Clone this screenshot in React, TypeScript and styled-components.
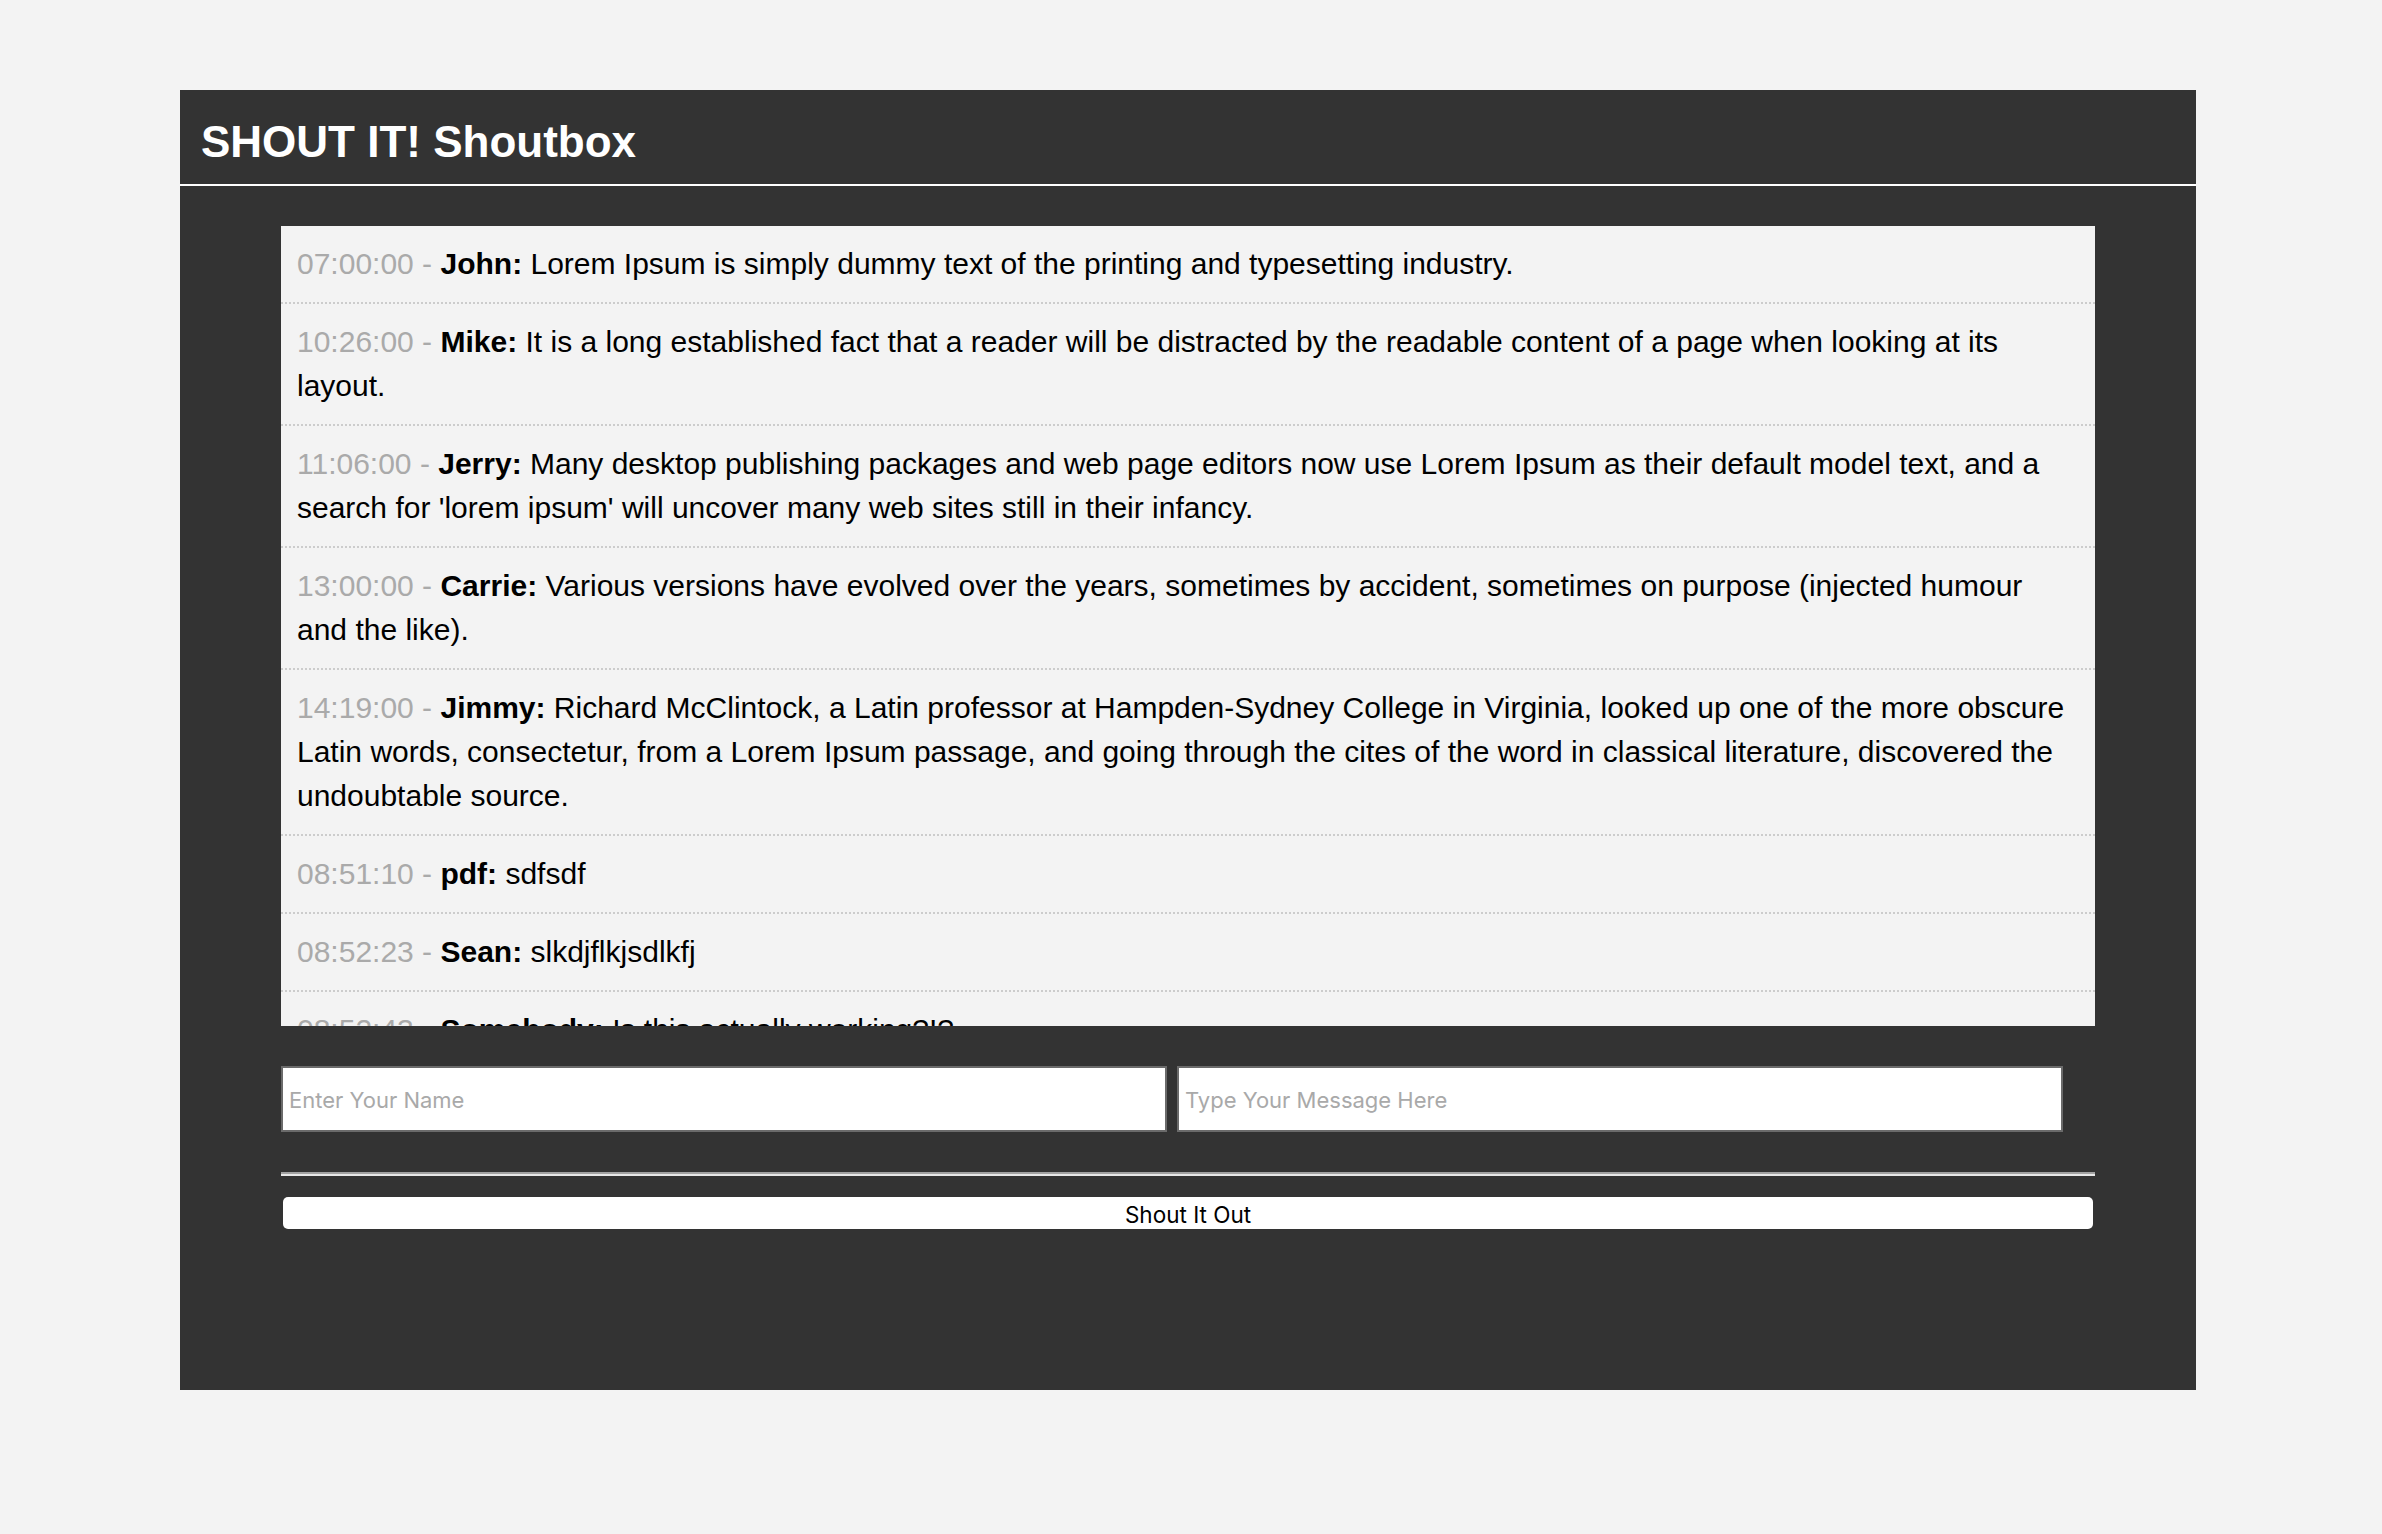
import React from "react";
import styled, { createGlobalStyle } from "styled-components";

const GlobalStyle = createGlobalStyle`
  html, body {
    margin: 0;
    padding: 0;
    background: #f3f3f3;
  }
  body {
    font-family: "Liberation Sans", Arial, Helvetica, sans-serif;
  }
  * { box-sizing: border-box; }
`;

const Page = styled.div`
  padding: 90px 0 144px 180px;
`;

const Container = styled.div`
  width: 2016px;
  height: 1300px;
  background: #333333;
  display: flex;
  flex-direction: column;
`;

const Header = styled.header`
  height: 96px;
  padding: 30px 0 0 21px;
  border-bottom: 2px solid #ffffff;
`;

const Title = styled.h1`
  margin: 0;
  font-family: "Liberation Sans", Arial, sans-serif;
  font-weight: bold;
  font-size: 44px;
  line-height: 44px;
  color: #ffffff;
`;

const Main = styled.main`
  padding: 40px 101px 0 101px;
  display: flex;
  flex-direction: column;
`;

const Shouts = styled.ul`
  list-style: none;
  margin: 0;
  padding: 0;
  height: 800px;
  overflow: hidden;
  background: #f3f3f3;
`;

const Shout = styled.li`
  padding: 16px 16px 16px 16px;
  border-bottom: 2px dotted #cccccc;
  font-family: "Liberation Sans", Arial, sans-serif;
  font-size: 30px;
  line-height: 44px;
  color: #000000;
`;

const Time = styled.span`
  color: #aaaaaa;
`;

const Name = styled.strong`
  font-weight: bold;
`;

const Form = styled.form`
  margin-top: 40px;
  display: flex;
  flex-direction: column;
`;

const Inputs = styled.div`
  display: flex;
  gap: 10px;
`;

const TextInput = styled.input`
  width: 886px;
  height: 66px;
  border: 2px solid #6b6b6b;
  background: #ffffff;
  padding: 2px 6px 0 6px;
  font-family: Inter, "Noto Sans", sans-serif;
  font-size: 22px;
  color: #000;
  outline: none;
  &::placeholder {
    color: #a9a9a9;
  }
`;

const Rule = styled.hr`
  margin: 40px 0 0 0;
  height: 0;
  border: none;
  border-top: 2px solid #a3a3a3;
  border-bottom: 2px solid #e8e8e8;
`;

const Button = styled.button`
  margin: 21px 2px 0 2px;
  height: 32px;
  background: #ffffff;
  border: none;
  border-radius: 5px;
  font-family: Inter, "Noto Sans", sans-serif;
  font-size: 22.5px;
  color: #000000;
  padding: 2px 0 0 0;
  cursor: pointer;
`;

type Msg = { time: string; name: string; text: string };

const messages: Msg[] = [
  { time: "07:00:00", name: "John", text: "Lorem Ipsum is simply dummy text of the printing and typesetting industry." },
  { time: "10:26:00", name: "Mike", text: "It is a long established fact that a reader will be distracted by the readable content of a page when looking at its layout." },
  { time: "11:06:00", name: "Jerry", text: "Many desktop publishing packages and web page editors now use Lorem Ipsum as their default model text, and a search for 'lorem ipsum' will uncover many web sites still in their infancy." },
  { time: "13:00:00", name: "Carrie", text: "Various versions have evolved over the years, sometimes by accident, sometimes on purpose (injected humour and the like)." },
  { time: "14:19:00", name: "Jimmy", text: "Richard McClintock, a Latin professor at Hampden-Sydney College in Virginia, looked up one of the more obscure Latin words, consectetur, from a Lorem Ipsum passage, and going through the cites of the word in classical literature, discovered the undoubtable source." },
  { time: "08:51:10", name: "pdf", text: "sdfsdf" },
  { time: "08:52:23", name: "Sean", text: "slkdjflkjsdlkfj" },
  { time: "08:52:43", name: "Somebody", text: "Is this actually working?!?" },
  { time: "08:53:05", name: "Sean", text: "Yes it is" },
];

export default function App() {
  return (
    <>
      <GlobalStyle />
      <Page>
        <Container>
          <Header>
            <Title>SHOUT IT! Shoutbox</Title>
          </Header>
          <Main>
            <Shouts>
              {messages.map((m, i) => (
                <Shout key={i}>
                  <Time>{m.time} - </Time>
                  <Name>{m.name}:</Name> {m.text}
                </Shout>
              ))}
            </Shouts>
            <Form onSubmit={(e) => e.preventDefault()}>
              <Inputs>
                <TextInput type="text" placeholder="Enter Your Name" />
                <TextInput type="text" placeholder="Type Your Message Here" />
              </Inputs>
              <Rule />
              <Button type="submit">Shout It Out</Button>
            </Form>
          </Main>
        </Container>
      </Page>
    </>
  );
}
